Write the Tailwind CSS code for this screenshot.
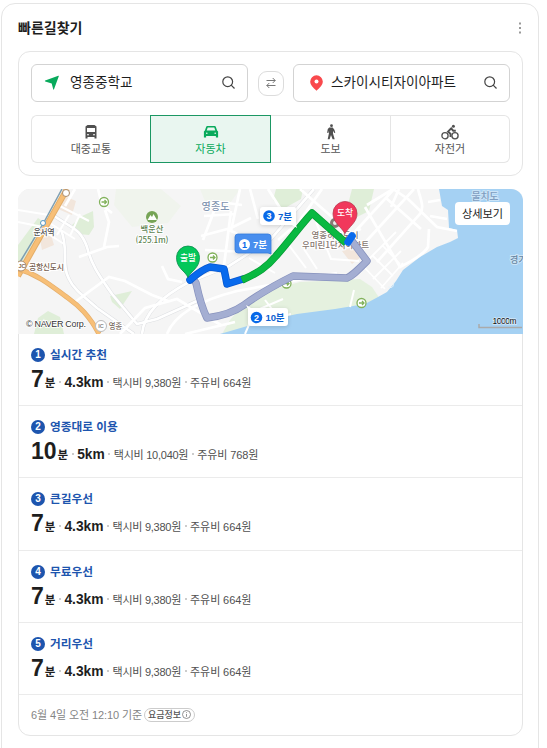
<!DOCTYPE html>
<html lang="ko">
<head>
    <meta charset="UTF-8">
    <meta name="viewport" content="width=device-width, initial-scale=1.0">
    <title>빠른길찾기</title>
    <script src="https://cdn.jsdelivr.net/npm/@tailwindcss/browser@4"></script>
</head>
<body class="bg-white text-[#1e1e1e] h-[748px] overflow-hidden font-['Liberation_Sans','Noto_Sans_CJK_KR',sans-serif]">
    <div class="ml-px mt-[3px] w-[538px] h-[780px] border border-[#e5e5e5] rounded-[14px] px-4">
        <!-- Header -->
        <div class="flex items-center justify-between h-[47px]">
            <h1 class="text-[14px] leading-5 font-bold">빠른길찾기</h1>
            <svg class="w-[4px] h-[12px]" viewBox="0 0 4 12" fill="#999"><rect x="1" y="0.5" width="2" height="2"/><rect x="1" y="5" width="2" height="2"/><rect x="1" y="9.5" width="2" height="2"/></svg>
        </div>

        <!-- Search box -->
        <div class="w-[505px] h-[125px] border border-[#e5e5e5] rounded-[12px] p-3">
            <div class="flex items-center justify-between w-[479px]">
                <div class="flex items-center w-[217px] h-[38px] border border-[#d3d3d3] rounded-[6px] pl-3 pr-3">
                    <svg class="w-4 h-4" viewBox="0 0 16 16"><path d="M1.2 5.6 14.3.7a.4.4 0 0 1 .5.5L10 14.3c-.2.5-.7.4-.8 0L7.7 8.6 1.3 6.5c-.5-.2-.6-.7-.1-.9z" fill="#09aa5c"/></svg>
                    <span class="ml-[10px] text-[13.6px] leading-5 grow">영종중학교</span>
                    <svg class="w-[13px] h-[13px] -mt-0.5" viewBox="0 0 13 13" fill="none" stroke="#444" stroke-width="1.2"><circle cx="5.7" cy="5.7" r="4.9"/><path d="m9.2 9.2 3.3 3.3"/></svg>
                </div>
                <div class="flex items-center justify-center w-[26px] h-[25px] border border-[#dcdcdc] rounded-[9px]">
                    <svg class="w-[10px] h-[12px]" viewBox="0 0 10 12" fill="none" stroke="#777" stroke-width="1"><path d="M.5 3.5h8.7M6.7 1l2.500 2.500L6.700 6M9.500 8.500H.8M3.300 6 .8 8.500 3.300 11"/></svg>
                </div>
                <div class="flex items-center w-[217px] h-[38px] border border-[#d3d3d3] rounded-[6px] pl-4 pr-3">
                    <svg class="w-[13px] h-[16px]" viewBox="0 0 13 16"><path d="M6.500.3a6.300 6.300 0 0 1 6.300 6.300c0 3.600-2.800 5.900-6.300 9.200C3 12.500.2 10.200.2 6.600A6.300 6.300 0 0 1 6.500.3z" fill="#f9494d"/><circle cx="6.500" cy="6.500" r="2" fill="#fff"/></svg>
                    <span class="ml-[8px] text-[13.6px] leading-5 grow">스카이시티자이아파트</span>
                    <svg class="w-[13px] h-[13px] -mt-0.5" viewBox="0 0 13 13" fill="none" stroke="#444" stroke-width="1.2"><circle cx="5.7" cy="5.7" r="4.9"/><path d="m9.2 9.2 3.3 3.3"/></svg>
                </div>
            </div>
            <div class="grid grid-cols-[119px_121px_120px_119px] mt-[13px] w-[479px] h-[48px] text-[11px] leading-[18px] text-[#555]">
                <div class="flex flex-col items-center pt-2 border border-r-0 border-[#e5e5e5] rounded-l-[6px]">
                    <svg class="w-4 h-4" viewBox="0 0 16 16"><path d="M4.500 1h7l2 1.500V14.500H11.500V13H4.500v1.500H2.500V2.500z" fill="#505050"/><path d="M4 4h8v4H4z" fill="#fff"/><path d="M4 10.200h2v1.100H4zM10 10.200h2v1.100h-2z" fill="#fff"/></svg>
                    <span>대중교통</span>
                </div>
                <div class="flex flex-col items-center pt-2 border border-[#1b9763] bg-[#e9f6f0] text-[#09aa5c]">
                    <svg class="w-4 h-4" viewBox="0 0 16 16"><path d="M4.300 2h7.400c.6 0 1 .3 1.200.9l1.200 3.600 1 .9v6.100h-2.200V12H3.100v1.500H.9V7.400l1-.9 1.200-3.600c.2-.6.6-.9 1.200-.9z" fill="#09aa5c"/><path d="M4.700 3.400h6.600l1 3H3.700z" fill="#e9f6f0"/><circle cx="3.800" cy="9.300" r=".8" fill="#e9f6f0"/><circle cx="12.200" cy="9.300" r=".8" fill="#e9f6f0"/></svg>
                    <span>자동차</span>
                </div>
                <div class="flex flex-col items-center pt-2 border-y border-r border-[#e5e5e5]">
                    <svg class="w-4 h-4" viewBox="0 0 16 16" fill="#505050"><circle cx="8.500" cy="1.700" r="1.400"/><path d="M6.200 3.600h3.500l1.700 2.200.9 2.900-1 .4-1.300-2.300v2.600l1.700 5.800H9.600L8 11l-1.400 4.200H4.700L6 9V6.700L5.400 9l-1.300-.3.700-3.600z"/></svg>
                    <span>도보</span>
                </div>
                <div class="flex flex-col items-center pt-2 border-y border-r border-[#e5e5e5] rounded-r-[6px]">
                    <svg class="w-[18px] h-4" viewBox="0 0 18 16" fill="none" stroke="#505050" stroke-width="1.300"><circle cx="4" cy="11.700" r="3.100"/><circle cx="14" cy="11.700" r="3.100"/><path d="M9.500 13V9.800L7 7.700l3.200-3.300 2 2.300h2.600" stroke-width="1.900"/><circle cx="12.400" cy="2.300" r="1.500" fill="#505050" stroke="none"/></svg>
                    <span>자전거</span>
                </div>
            </div>
        </div>

        <!-- Result card -->
        <div class="mt-[13px] w-[505px] h-[547px] border border-[#e5e5e5] rounded-[12px]">
            <svg class="block w-[505px] h-[145px] -ml-px -mt-px rounded-t-[12px]" viewBox="18 189 505 145" font-family="'Liberation Sans','Noto Sans CJK KR',sans-serif">
                <rect x="18" y="189" width="505" height="145" fill="#f5f5f5"/>
                <!-- parks -->
                <g fill="#dfeed8">
                    <path d="M82 216l11-5 1 16-5 8-10-1-7-9zM18 245l20-27 6 4-26 50zM38 318l10-7 12 6 4 17H34zM110 296l22-5-12 18-8-7zM276 189h27l-2 10-18 10-10-9zM352 189h22l-5 22-12 6-10-9z"/>
                    <path d="M222 334l8-14 12-14 32-17 26-7 60-3 12 8 8 12 18-18 4 3-8 14-15 8-40 6-119 22z" fill="#e5f1df"/>
                    <path d="M116 189h45l20 17-13 17-36 4-18-22zM200 189h40l-14 20-20-5z" fill="#f0f4ed"/>
                </g>
                <!-- sea -->
                <path d="M439 189l3 17 6 4 1 18 8 2 1 8-8 4-13 5-17 10-17 13-7 11-9 11-9 5-13 7-30 5-38 5-32 7-45 13h303V189z" fill="#a5d1f3"/>
                <path d="M388 287c6 2 5-2 6-5" fill="none" stroke="#eaf4fa" stroke-width="1"/>
                <g fill="#f2e6dc"><path d="M62 195l14 6-4 14-14-6zM40 239l11-4 3 10-12 5zM342 251l11-4 8 10-9 7z"/></g>
                <!-- streets -->
                <path d="M61 230c8 18 0 35 8 49 5 11 16 18 28 29l37 26M50 213c20 15 30 14 37 34 5 20 14 31 25 47l25 30 20-5 40-18M142 334c2-21 19-37 47-52l40-16 42-27 43-50" fill="none" stroke="#dddfe2" stroke-width="3.600"/>
                <g fill="none" stroke="#fff" stroke-width="2.700">
                    <path d="M61 230c8 18 0 35 8 49 5 11 16 18 28 29l37 26M50 213c20 15 30 14 37 34 5 20 14 31 25 47l25 30 20-5 40-18M142 334c2-21 19-37 47-52l40-16 42-27 43-50"/>
                    <path d="M75 302l34-25 16 4 27 14 16 6M79 257l28-10 12-1M120 334l25-26 32-9 44 26M162 266l6 13 14 3M167 334c7-18 30-33 70-43l100-18M185 334l50-12M105 210l4 12-5 25M65 206l10-17M98 189l4 16 10 8"/>
                    <path d="M18 210l31 5M18 222l30 6M54 203l35 18M48 222l27 17M42 230l22 14M69 215l-12 20M80 214l-10 22" stroke-width="2"/>
                    <path d="M201 236l30-8 20-10M204 216l31-2M216 206l-13 34M231 211l-9 70M212 201l30 4M240 189l-9 42 30 13M205 250l43 2M250 189l8 30M322 189l-24 34-20 17M300 189l40 35M268 189l14 22"/>
                    <path d="M352 235l42-46M361 247l53-58M377 262l43-48c5-7 0-16-2-25M365 207l35 60c12-6 24-13 28-20l1-18M367 205l26-16 15 10 29 28 20 4M386 198l35 31M399 189l-8 18M428 202l12-2M430 216l17 3"/>
                    <path d="M364 264l32-32M373 279l28-28M381 288l22-25M363 266l22 23M373 256l20 20M383 246l17 18" stroke-width="1.800"/>
                    <path d="M316 222l15 37 28 2M304 249l13 20M320 249l41-20M285 240l21 28M249 258l26 15M245 334l10-23 28-12M265 300l13 17 13-3M350 307l4-17" stroke-width="2"/>
                </g>
                <!-- expressway and rail -->
                <path d="M67 189L18 276" fill="none" stroke="#e3ad68" stroke-width="6"/>
                <path d="M67 189L18 276" fill="none" stroke="#f7bf77" stroke-width="4"/>
                <path d="M18 269c22 6 37 20 50 29 11 8 21 17 31 36" fill="none" stroke="#e4ae6c" stroke-width="5"/>
                <path d="M18 269c22 6 37 20 50 29 11 8 21 17 31 36" fill="none" stroke="#f7bf77" stroke-width="3.600"/>
                <path d="M62 189L43 224 20 262" fill="none" stroke="#7e9fb2" stroke-width="1.500"/>
                <circle cx="43" cy="223" r="2.500" fill="#fff" stroke="#579ac5"/>
                <g fill="#fff" stroke="#aa8b6b"><circle cx="21" cy="266" r="5"/><circle cx="66" cy="193" r="3.500"/><circle cx="101" cy="326" r="5.500" stroke="#bbb"/></g>
                <g font-size="5.500" font-weight="700" fill="#86684b" text-anchor="middle"><text x="22" y="268">JC</text><text x="101" y="328" fill="#888">IC</text></g>
                <!-- trail markers -->
                <g fill="#fff" stroke="#82b25c" stroke-width="1.300">
                    <circle cx="104" cy="202" r="4.500"/><path d="M101.500 202h5m-2-2 2 2-2 2"/>
                    <circle cx="212.500" cy="257.500" r="4.500"/><path d="M210 257.500h5m-2-2 2 2-2 2"/>
                    <circle cx="286.500" cy="283.500" r="4.500"/><path d="M284 283.500h5m-2-2 2 2-2 2"/>
                    <circle cx="361.500" cy="303" r="4.500"/><path d="M359 303h5m-2-2 2 2-2 2"/>
                </g>
                <circle cx="152" cy="217" r="6" fill="#76a456"/><path d="M147.500 220l3-5 1.500 2 1.500-3 3.500 6z" fill="#fff"/>
                <!-- place names -->
                <g font-family="'Noto Sans CJK KR',sans-serif" font-size="8" font-weight="500" stroke="#fff" stroke-width="2" paint-order="stroke" text-anchor="middle">
                    <text x="44" y="234.500" fill="#555" textLength="21">운서역</text>
                    <text x="46.500" y="269.500" fill="#765f51" textLength="35">공항신도시</text>
                    <text x="115.500" y="329" fill="#776960" font-size="7.500" textLength="13.500">영종</text>
                    <text x="152" y="231.500" fill="#608453" font-size="8.300" textLength="23">백운산</text>
                    <text x="152" y="242.500" fill="#608453" font-size="8.300" textLength="33">(255.1m)</text>
                    <text x="215.500" y="210" fill="#7f94b0" font-size="10" textLength="28">영종도</text>
                    <text x="335" y="237.500" fill="#85766f" font-size="8.500" textLength="47">영종하늘도시</text>
                    <text x="335.500" y="248" fill="#85766f" font-size="8.500" textLength="67">우미린1단지아파트</text>
                    <text x="485" y="200" fill="#7e9dc0" stroke="#cbe4f7" font-size="10" textLength="27">물치도</text>
                    <text x="510" y="263" fill="#6887a2" stroke="#cbe4f7" font-size="9" text-anchor="start">경기</text>
                </g>
                <circle cx="335" cy="223" r="5" fill="#897975"/><circle cx="335" cy="223" r="2" fill="#eee"/>
                <!-- routes -->
                <g fill="none" stroke-linejoin="round">
                    <path d="M193 279l3 4c3 14 6 25 11 35 15-2 26-5 37-13 15-11 31-20 49-29l54 2c5-2 9-6 20-17l-18-24" stroke="#8792bd" stroke-width="7.500"/>
                    <path d="M193 279l3 4c3 14 6 25 11 35 15-2 26-5 37-13 15-11 31-20 49-29l54 2c5-2 9-6 20-17l-18-24" stroke="#a4aed2" stroke-width="6"/>
                    <path d="M190 280c6-5 11-10 20-13l14 2 3 15 16-5" stroke="#0757ce" stroke-width="7.500" stroke-linecap="round"/>
                    <path d="M190 280c6-5 11-10 20-13l14 2 3 15 16-5" stroke="#086aed" stroke-width="6" stroke-linecap="round"/>
                    <path d="M242 280c16-7 25-13 34-24 14-16 24-30 36-43l34 30" stroke="#079a34" stroke-width="7.500"/>
                    <path d="M242 280c16-7 25-13 34-24 14-16 24-30 36-43l34 30" stroke="#09b941" stroke-width="6"/>
                    <path d="M348 242l4-6" stroke="#086aed" stroke-width="7.500" stroke-linecap="round"/>
                </g>
                <!-- start and goal pins -->
                <path d="M188 277.500c-3-7-11.500-9-11.500-20a11.500 11.500 0 0 1 23 0c0 11-8.500 13-11.500 20z" fill="#04c75a" stroke="#068c4b" stroke-width=".8"/>
                <path d="M345 233.500c-4-7-12-11-12-20a12 12 0 0 1 24 0c0 9-8 13-12 20z" fill="#f1385b" stroke="#ba3850" stroke-width=".8"/>
                <g fill="#fff" font-size="8.800" font-weight="500" text-anchor="middle"><text x="188" y="261" textLength="16">출발</text><text x="345" y="216" textLength="16">도착</text></g>
                <!-- duration bubbles -->
                <g class="drop-shadow-sm">
                    <path d="M263 207h31a2 2 0 0 1 2 2v16l1 3-5-3h-29a3 3 0 0 1-3-3v-12a3 3 0 0 1 3-3z" fill="#fff"/>
                    <path d="M238 234h30a3 3 0 0 1 3 3v17l-3-1h-30a3 3 0 0 1-3-3v-13a3 3 0 0 1 3-3z" fill="#488eee" stroke="#347bdc" stroke-width=".8"/>
                    <path d="M246 305l5 3h34a3 3 0 0 1 3 3v12a3 3 0 0 1-3 3h-34a3 3 0 0 1-3-3v-14z" fill="#fff"/>
                </g>
                <circle cx="269" cy="216" r="5.800" fill="#0869e8"/><circle cx="244.500" cy="244.500" r="5.500" fill="#fff"/><circle cx="256.500" cy="317.500" r="5.800" fill="#0869e8"/>
                <g font-size="9" font-weight="700" text-anchor="middle">
                    <text x="269" y="219.300" fill="#fff">3</text><text x="285" y="219.500" font-size="9.500" fill="#0b61d1" textLength="14">7분</text>
                    <text x="244.500" y="247.800" fill="#0869e8">1</text><text x="260" y="248" font-size="9.500" fill="#fff" textLength="14">7분</text>
                    <text x="256.500" y="320.800" fill="#fff">2</text><text x="275" y="321" font-size="9.500" fill="#0b61d1" textLength="19">10분</text>
                </g>
                <!-- controls over the map -->
                <rect x="455" y="202" width="55" height="23" rx="4" fill="#fff"/>
                <text x="482.500" y="217.500" font-size="11.200" text-anchor="middle" textLength="41" fill="#222">상세보기</text>
                <text x="26" y="327" font-size="9" textLength="60" fill="#333" stroke="#fff" stroke-width="1.500" paint-order="stroke">© NAVER Corp.</text>
                <text x="492.500" y="324" font-size="8.500" textLength="24" fill="#111" stroke="#d5e9f8" stroke-width="1.500" paint-order="stroke">1000m</text>
                <path d="M479 324v3.500h43" fill="none" stroke="#aaa" stroke-width="1.500"/>
            </svg>
            <div id="routes"></div>
            <div class="flex items-center h-[40px] pl-3 text-[11px] text-[#858585]">
                <span class="w-[111px] tracking-[-0.1px] whitespace-nowrap">6월 4일 오전 12:10 기준</span>
                <span class="flex items-center justify-center gap-px ml-[2px] w-[51px] h-[14px] border border-[#ccc] rounded-full text-[9px] leading-3 font-medium text-[#555] whitespace-nowrap">
                    요금정보
                    <svg class="w-[9px] h-[9px]" viewBox="0 0 9 9" fill="none" stroke="#777" stroke-width=".8"><circle cx="4.500" cy="4.500" r="4"/><path d="M4.500 4v2.800M4.500 2.200v.9"/></svg>
                </span>
            </div>
        </div>
    </div>

    <script>
        const routes = [
            { name: '실시간 추천', min: 7, km: '4.3km', taxi: '9,380', fuel: '664' },
            { name: '영종대로 이용', min: 10, km: '5km', taxi: '10,040', fuel: '768' },
            { name: '큰길우선', min: 7, km: '4.3km', taxi: '9,380', fuel: '664' },
            { name: '무료우선', min: 7, km: '4.3km', taxi: '9,380', fuel: '664' },
            { name: '거리우선', min: 7, km: '4.3km', taxi: '9,380', fuel: '664' }
        ];
        const dot = '<i class="w-[2px] h-[2px] mx-[3.5px] self-center translate-y-[3px] rounded-full bg-[#bbb]"></i>';

        document.getElementById('routes').innerHTML = routes.map((r, i) => `
            <div class="h-[72.200px] border-b border-[#ebebeb] pl-3 pt-[13px]">
                <div class="flex items-center h-4 text-[11.700px] leading-4 font-bold text-[#1d55ae]">
                    <span class="flex items-center justify-center w-[14px] h-[14px] mr-[5px] rounded-full bg-[#1d55ae] text-white text-[10px] leading-[14px]">${i + 1}</span>
                    ${r.name}
                </div>
                <div class="flex items-baseline h-[28px] leading-[28px] mt-[2px] whitespace-nowrap">
                    <b class="text-[23px]">${r.min}</b>
                    <b class="text-[11.500px] ml-px">분</b>
                    ${dot}
                    <b class="text-[13.800px]">${r.km}</b>
                    ${dot}
                    <span class="text-[11px] tracking-[-0.250px] text-[#505050]">택시비 ${r.taxi}원</span>
                    ${dot}
                    <span class="text-[11px] tracking-[-0.100px] text-[#505050]">주유비 ${r.fuel}원</span>
                </div>
            </div>`).join('');
    </script>
</body>
</html>
